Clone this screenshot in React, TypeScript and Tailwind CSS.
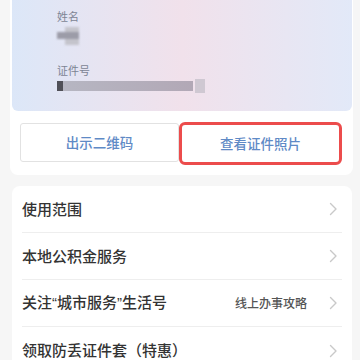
import React from "react";

const Chevron = () => (
  <svg width="9" height="14" viewBox="0 0 9 14" fill="none">
    <path d="M1.5 1.5 L7 7 L1.5 12.5" stroke="#c9c9c9" strokeWidth="1.4" strokeLinecap="round" strokeLinejoin="round" />
  </svg>
);

const Q = ({ c }: { c: string }) => (
  <span style={{ fontFamily: '"Liberation Sans", sans-serif' }}>{c}</span>
);

const rows: { label: React.ReactNode; extra?: string }[] = [
  { label: "使用范围" },
  { label: "本地公积金服务" },
  {
    label: (
      <>
        关注<Q c="“" />城市服务<Q c="”" />生活号
      </>
    ),
    extra: "线上办事攻略",
  },
  { label: "领取防丢证件套（特惠）" },
];

export default function App() {
  return (
    <div
      className="w-[360px] h-[360px] overflow-hidden bg-[#f6f6f6]"
      style={{ fontFamily: '"Noto Sans CJK SC", "Noto Sans", sans-serif' }}
    >
      <div className="ml-[10px] w-[343px] bg-white rounded-b-lg pb-[10px]">
        <div className="ml-[2px] w-[340px] h-[111px] rounded-b-md bg-gradient-to-r from-[#dce7f8] via-[#f1e1eb] to-[#e2e9f8] pl-[45px] pt-[8px]">
          <div className="text-[11px] leading-[16px] text-[#7d8494]">姓名</div>
          <div className="relative mt-[3px] h-[18px] w-[24px] blur-[1px]">
            <div className="absolute left-[8px] top-0 h-[18px] w-[14px] bg-[#c4c4cc]" />
            <div className="absolute left-0 top-[5px] h-[7px] w-[22px] bg-[#9c9ca8]" />
          </div>
          <div className="mt-[17px] text-[11px] leading-[16px] text-[#7d8494]">证件号</div>
          <div className="mt-[1px] flex items-center blur-[0.6px]">
            <div className="h-[10px] w-[6px] bg-[#505058]" />
            <div className="h-[10px] w-[130px] bg-gradient-to-r from-[#b6b6c2] to-[#b2a8b6]" />
            <div className="ml-[2px] h-[14px] w-[10px] bg-[#cfc8d2]" />
          </div>
        </div>
        <div className="mt-[11px] flex pl-[10px] pr-[7px]">
          <div className="flex h-[39px] w-[159px] mt-[1px] items-center justify-center rounded-[3px] border border-[#e2e2e2] text-[13.5px] font-medium text-[#5f8ac6]">
            出示二维码
          </div>
          <div className="flex h-[43px] w-[163px] items-center justify-center rounded-[6px] border-[3px] border-[#ec4c4c] text-[13.5px] font-medium text-[#5f8ac6]">
            查看证件照片
          </div>
        </div>
      </div>
      <div className="ml-[12px] mt-[11px] w-[340px] rounded-lg bg-white px-[10px]">
        {rows.map((r, i) => (
          <div
            key={i}
            className={`flex h-[47px] items-center ${i < rows.length - 1 ? "border-b border-[#eeeeee]" : ""}`}
          >
            <span className="flex-1 text-[15px] font-medium text-[#333333]">{r.label}</span>
            {r.extra && <span className="mr-[22px] text-[12px] font-medium text-[#555555]">{r.extra}</span>}
            <span className="mr-[4px]">
              <Chevron />
            </span>
          </div>
        ))}
      </div>
    </div>
  );
}
